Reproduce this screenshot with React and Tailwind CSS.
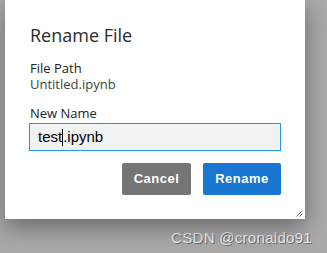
export default function App() {
  return (
    <div className="w-[327px] h-[253px] overflow-hidden bg-[#a9a9a9]">
      <div
        className="relative ml-[5px] w-[300px] h-[219px] bg-white px-[24px] pt-[23px] shadow-[0_8px_22px_rgba(0,0,0,0.38)]"
        style={{ fontFamily: '"Open Sans", "Noto Sans", sans-serif' }}
      >
        <div className="text-[18px] leading-[24px] text-[#2b2b2b] pl-[1px]">Rename File</div>
        <div className="mt-[13px] text-[13px] leading-[16px] text-[#222] pl-[1px]">File Path</div>
        <div className="text-[13px] leading-[16px] text-[#444] pl-[1px]">Untitled.ipynb</div>
        <div className="mt-[13px] text-[13px] leading-[16px] text-[#222] pl-[1px]">New Name</div>
        <div
          className="mt-[2px] h-[28px] w-[252px] border border-[#2196f3] bg-[#f1f2f2] pl-[8px] flex items-center text-[15px] text-black"
          style={{ fontFamily: '"Liberation Sans", Arial, sans-serif' }}
        >
          <span>test</span>
          <span className="inline-block w-px h-[17px] bg-black"></span>
          <span>.ipynb</span>
        </div>
        <div
          className="mt-[12px] flex justify-end gap-[12px]"
          style={{ fontFamily: '"Liberation Sans", Arial, sans-serif' }}
        >
          <div className="w-[69px] h-[32px] rounded-[2px] bg-[#757575] text-white font-bold text-[13px] tracking-[0.5px] flex items-center justify-center">
            Cancel
          </div>
          <div className="w-[78px] h-[32px] rounded-[2px] bg-[#1976d2] text-white font-bold text-[13px] tracking-[0.5px] flex items-center justify-center">
            Rename
          </div>
        </div>
        <svg className="absolute right-[2px] bottom-[2px]" width="7" height="7" viewBox="0 0 7 7">
          <line x1="0.5" y1="6.5" x2="6.5" y2="0.5" stroke="#666" strokeWidth="1" />
          <line x1="3.5" y1="6.5" x2="6.5" y2="3.5" stroke="#666" strokeWidth="1" />
        </svg>
      </div>
      <div className="flex justify-end pr-[15px] mt-[10px]">
        <div
          className="text-[15px] leading-[18px] tracking-[0.3px] text-[#ececec] [text-shadow:1px_1px_0_#6e6e6e]"
          style={{ fontFamily: '"Liberation Sans", Arial, sans-serif' }}
        >
          CSDN @cronaldo91
        </div>
      </div>
    </div>
  );
}
